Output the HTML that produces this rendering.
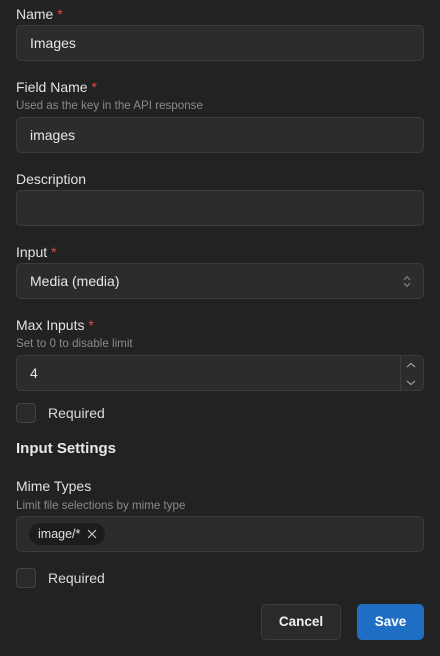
<!DOCTYPE html>
<html><head><style>
*{box-sizing:border-box;margin:0;padding:0}
body{width:440px;height:656px;background:#222222;font-family:"Liberation Sans",sans-serif;color:#e4e4e4;position:relative;overflow:hidden}
.a{position:absolute}
.l{font-size:14px;color:#e2e2e2;left:16px;line-height:16px}
.l b{color:#e5484d;font-weight:normal}
.h{font-size:11.6px;color:#8a8a8a;left:16px;line-height:13px}
.i{left:16px;width:408px;height:36px;background:#2c2c2c;border:1px solid #3c3c3c;border-radius:5px;font-size:14px;color:#e6e6e6;padding-left:13px;line-height:34px}
.cb{left:16px;width:20px;height:20px;border:1px solid #444;border-radius:4px;background:#2a2a2a}
.r{left:48px;font-size:14px;color:#dcdcdc;line-height:16px}
</style></head><body>
<div class="a l" style="top:6px">Name <b>*</b></div>
<div class="a i" style="top:25px">Images</div>
<div class="a l" style="top:79px">Field Name <b>*</b></div>
<div class="a h" style="top:99px">Used as the key in the API response</div>
<div class="a i" style="top:117px">images</div>
<div class="a l" style="top:171px">Description</div>
<div class="a i" style="top:190px"></div>
<div class="a l" style="top:244px">Input <b>*</b></div>
<div class="a i" style="top:263px">Media (media)
<svg class="a" style="right:12px;top:11px" width="8" height="13" viewBox="0 0 8 13"><path d="M1 5L4 1.5L7 5M1 8L4 11.5L7 8" fill="none" stroke="#888" stroke-width="1"/></svg></div>
<div class="a l" style="top:317px">Max Inputs <b>*</b></div>
<div class="a h" style="top:337px">Set to 0 to disable limit</div>
<div class="a i" style="top:355px">4
<div class="a" style="left:383px;top:0;width:1px;height:34px;background:#3c3c3c"></div>
<svg class="a" style="left:388px;top:5px" width="12" height="26" viewBox="0 0 12 26"><path d="M2 6L6 2.5L10 6M2 20L6 23.5L10 20" fill="none" stroke="#aaa" stroke-width="1.1"/></svg></div>
<div class="a cb" style="top:403px"></div>
<div class="a r" style="top:405px">Required</div>
<div class="a" style="left:16px;top:440px;font-size:15px;font-weight:bold;color:#e8e8e8">Input Settings</div>
<div class="a l" style="top:478px">Mime Types</div>
<div class="a h" style="top:499px">Limit file selections by mime type</div>
<div class="a i" style="top:516px"></div>
<div class="a" style="left:29px;top:523px;width:76px;height:22px;border-radius:11px;background:#1c1c1c;font-size:12.5px;color:#e0e0e0;line-height:22px;padding-left:9px">image/*
<svg class="a" style="left:58px;top:6px" width="10" height="10" viewBox="0 0 10 10"><path d="M1 1L9 9M9 1L1 9" stroke="#ccc" stroke-width="1.1"/></svg></div>
<div class="a cb" style="top:568px"></div>
<div class="a r" style="top:570px">Required</div>
<div class="a" style="left:261px;top:604px;width:80px;height:36px;border:1px solid #3c3c3c;border-radius:5px;background:#2a2a2a;font-size:13.5px;font-weight:bold;color:#eee;text-align:center;line-height:34px">Cancel</div>
<div class="a" style="left:357px;top:604px;width:67px;height:36px;border-radius:5px;background:#1e6fc4;font-size:13.5px;font-weight:bold;color:#fff;text-align:center;line-height:36px">Save</div>
</body></html>
